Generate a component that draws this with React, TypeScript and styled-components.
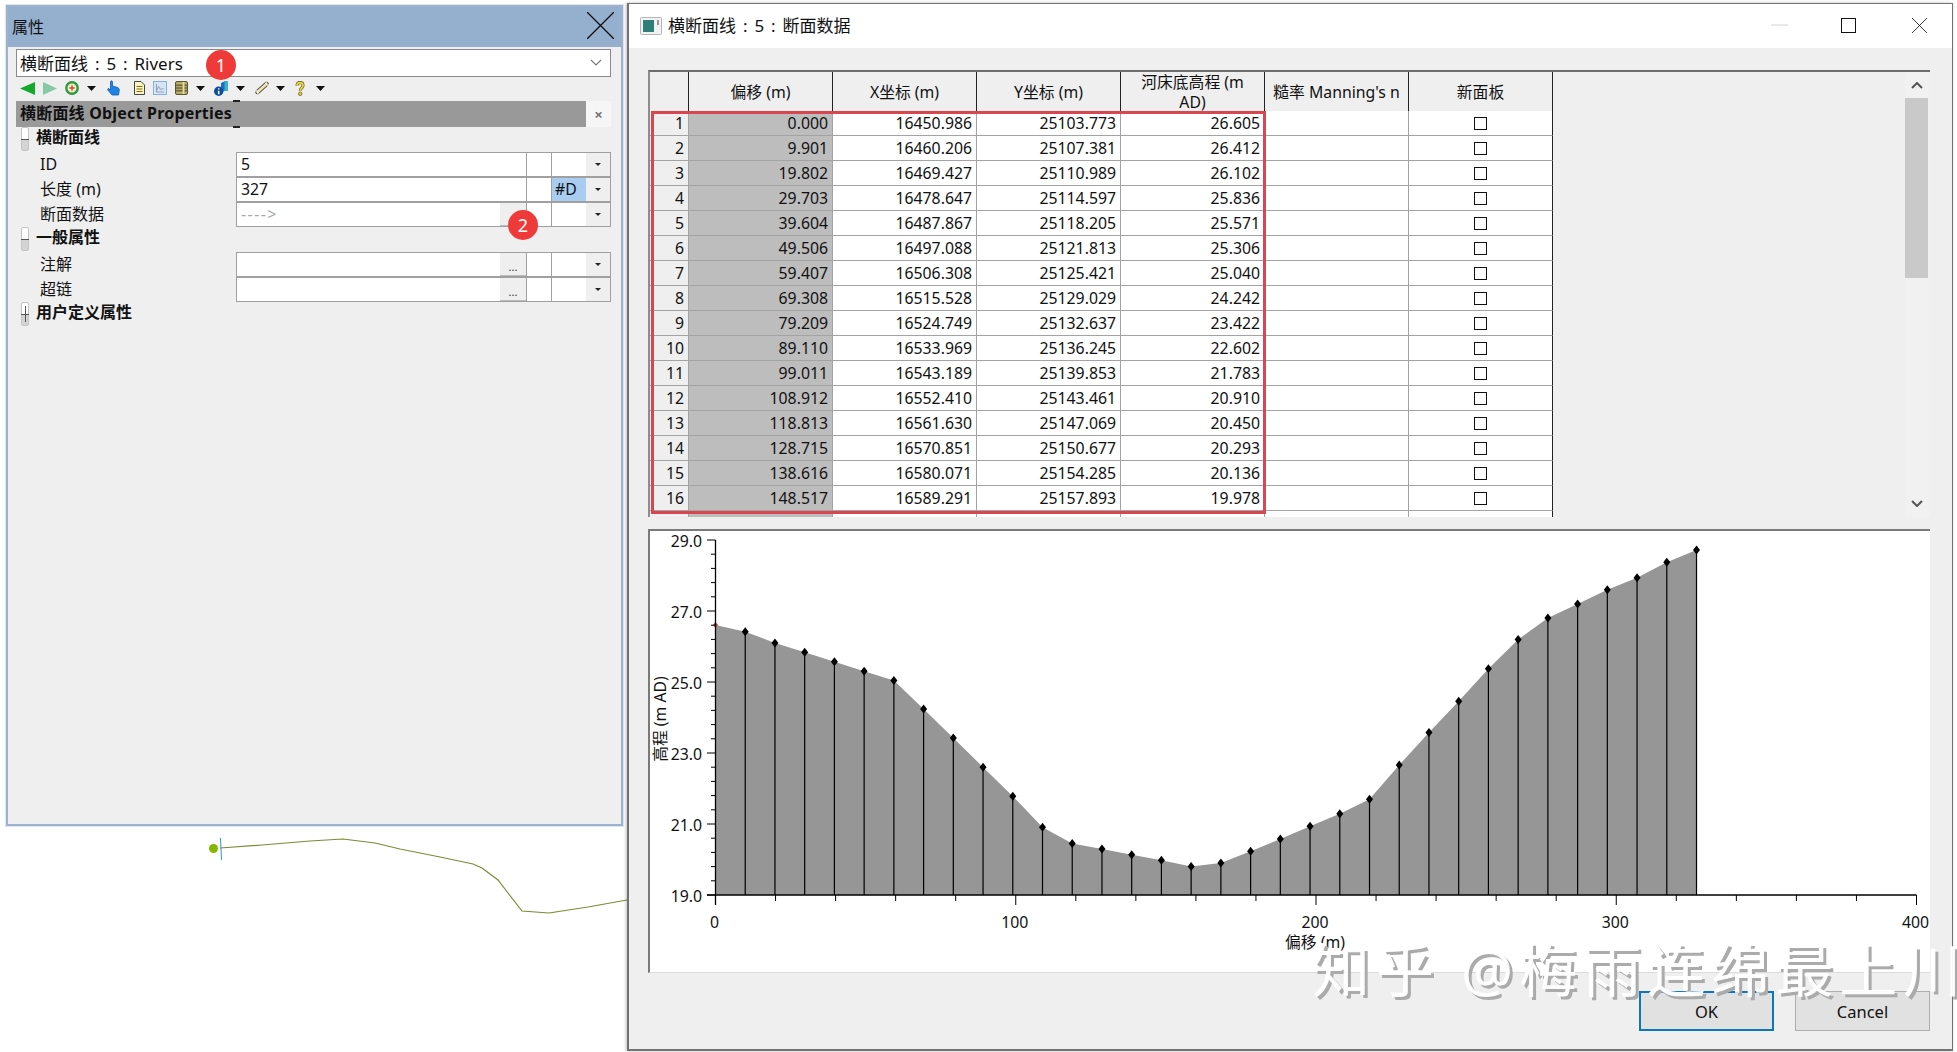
import React from 'react';
import styled, { createGlobalStyle } from 'styled-components';

const FONT = '"Noto Sans", "Noto Sans CJK SC", sans-serif';

const GlobalStyle = createGlobalStyle`
  html, body {
    margin: 0;
    padding: 0;
    background: #fff;
  }
  * {
    box-sizing: border-box;
  }
`;

const Desktop = styled.div`
  position: relative;
  width: 1957px;
  height: 1052px;
  overflow: hidden;
  background: #fff;
  font-family: ${FONT};
  color: #111;
`;

const RiverLine = styled.svg`
  position: absolute;
  left: 0;
  top: 0;
`;

/* ---------- properties window ---------- */

const PropsWindow = styled.section`
  position: absolute;
  left: 6px;
  top: 5px;
  width: 617px;
  height: 821px;
  background: #efefef;
  border: 2px solid #9db3cd;
  outline: 1px solid #dfe8f1;
  display: flex;
  flex-direction: column;
`;

const PropsTitleBar = styled.header`
  height: 40px;
  background: #95b0cf;
  display: flex;
  align-items: center;
  justify-content: space-between;
  padding: 0 7px 3px 4px;
  font-size: 16px;
`;

const PropsBody = styled.div`
  padding: 2px 10px 0 8px;
  display: flex;
  flex-direction: column;
`;

const ObjectSelect = styled.div`
  height: 28px;
  background: #fff;
  border: 1px solid #8a8a8a;
  display: flex;
  align-items: center;
  justify-content: space-between;
  padding: 0 8px 2px 3px;
  font-size: 17px;
  word-spacing: 2.5px;
`;

const Toolbar = styled.div`
  height: 24px;
  display: flex;
  align-items: center;
  padding: 0 0 2px 4px;
`;

const ToolIcon = styled.svg<{ $after: number }>`
  display: block;
  flex: none;
  margin-right: ${(p) => p.$after}px;
`;

const SectionHead = styled.div`
  height: 26px;
  display: flex;
  background: #efefef;
`;

const SectionTitle = styled.div`
  position: relative;
  flex: 1;
  background: #999;
  padding: 0 0 0 4px;
  font-size: 16px;
  font-weight: 700;
  letter-spacing: 0.2px;
  line-height: 24px;
  &::before,
  &::after {
    content: '';
    position: absolute;
    left: 217px;
    width: 7px;
    height: 2px;
    background: #222;
  }
  &::before {
    top: -1px;
  }
  &::after {
    bottom: -1px;
  }
`;

const SectionClose = styled.div`
  width: 25px;
  background: #f6f6f6;
  color: #777;
  font-size: 15px;
  font-weight: 700;
  text-align: center;
  line-height: 26px;
`;

const GroupRow = styled.div`
  height: 25px;
  display: flex;
  align-items: flex-start;
  gap: 7px;
  padding-left: 5px;
  font-size: 16px;
  font-weight: 700;
  line-height: 21px;
`;

const Toggle = styled.span<{ $closed?: boolean }>`
  position: relative;
  width: 8px;
  height: 24px;
  border: 1px solid #c4c4c4;
  border-radius: 2px;
  background: linear-gradient(#fff 50%, #d4d4d4 50%);
  &::before {
    content: '';
    position: absolute;
    left: -1px;
    right: -1px;
    top: 11px;
    height: 1px;
    background: #555;
  }
  &::after {
    content: '';
    display: ${(p) => (p.$closed ? 'block' : 'none')};
    position: absolute;
    left: 3px;
    top: 3px;
    bottom: 3px;
    width: 1px;
    background: #555;
  }
`;

const PropRow = styled.div`
  height: 25px;
  display: grid;
  grid-template-columns: 220px 290px 25px 35px 25px;
`;

const PropLabel = styled.div`
  padding-left: 24px;
  font-size: 16px;
  line-height: 24px;
`;

const PropValue = styled.div<{ $muted?: boolean }>`
  display: flex;
  justify-content: space-between;
  background: #fff;
  border: 1px solid #a0a0a0;
  border-width: 1px 0 1px 1px;
  padding-left: 4px;
  font-size: 15.8px;
  line-height: 23px;
  color: ${(p) => (p.$muted ? '#a8a8a8' : '#111')};
  letter-spacing: ${(p) => (p.$muted ? '1.5px' : '0')};
`;

const DotsButton = styled.span`
  width: 26px;
  height: 23px;
  overflow: hidden;
  background: #efefef;
  border-bottom: 1px solid #bbb;
  color: #333;
  font-size: 11px;
  line-height: 28px;
  letter-spacing: 0;
  text-align: center;
`;

const PropCell = styled.div<{ $selected?: boolean }>`
  background: ${(p) => (p.$selected ? '#a9cdf1' : '#fff')};
  border: 1px solid #a0a0a0;
  border-width: 1px 0 1px 1px;
  padding-left: 3px;
  font-size: 15.8px;
  line-height: 23px;
`;

const PropDrop = styled.div`
  position: relative;
  background: #efefef;
  border: 1px solid #a0a0a0;
  border-left: 0;
  &::after {
    content: '';
    position: absolute;
    left: 9px;
    top: 10px;
    border: 3px solid transparent;
    border-top: 3px solid #222;
  }
`;

const Badge = styled.span<{ $left: number; $top: number }>`
  position: absolute;
  left: ${(p) => p.$left}px;
  top: ${(p) => p.$top}px;
  width: 30px;
  height: 30px;
  border-radius: 50%;
  background: #ee3a38;
  color: #fff;
  font-size: 18px;
  line-height: 30px;
  text-align: center;
`;

/* ---------- section data dialog ---------- */

const DataDialog = styled.section`
  position: absolute;
  left: 627px;
  top: 3px;
  width: 1326px;
  height: 1048px;
  background: #efefef;
  border: 1px solid #727272;
  border-width: 1px 1px 2px 2px;
  box-shadow: -1px 0 3px rgba(0, 0, 0, 0.25);
  display: flex;
  flex-direction: column;
`;

const DialogTitleBar = styled.header`
  height: 44px;
  flex: none;
  background: #fff;
  display: flex;
  align-items: center;
  padding-left: 11px;
  font-size: 17px;
  word-spacing: 2.5px;
`;

const DialogTitle = styled.span`
  margin: 0 0 3px 6px;
  flex: 1;
`;

const WindowButton = styled.span<{ $w: number }>`
  width: ${(p) => p.$w}px;
  margin-bottom: 2px;
  display: flex;
  justify-content: center;
  align-items: center;
`;

const DialogBody = styled.div`
  flex: 1;
  padding: 22px 22px 0 19px;
  display: flex;
  flex-direction: column;
`;

const TableSection = styled.div`
  position: relative;
  flex: none;
  height: 447px;
  display: flex;
  overflow: hidden;
  border-top: 2px solid #6d6d6d;
  border-left: 2px solid #8d8d8d;
`;

const TableClip = styled.div`
  flex: 1;
  overflow: hidden;
`;

const GRID_COLUMNS = '39px repeat(6, 144px)';

const HeaderRow = styled.div`
  display: grid;
  grid-template-columns: ${GRID_COLUMNS};
  height: 39px;
  width: max-content;
`;

const HeaderCell = styled.div`
  display: flex;
  align-items: center;
  justify-content: center;
  text-align: center;
  padding: 0 1px 2px;
  background: #efefef;
  border-right: 1px solid #222;
  border-bottom: 1px solid #222;
  font-size: 15.8px;
  line-height: 20px;
  white-space: pre-line;
`;

const DataRow = styled.div`
  display: grid;
  grid-template-columns: ${GRID_COLUMNS};
  height: 25px;
  width: max-content;
`;

const Cell = styled.div<{ $tone?: 'head' | 'offset' }>`
  background: ${(p) => (p.$tone === 'head' ? '#efefef' : p.$tone === 'offset' ? '#bdbdbd' : '#fff')};
  border-right: 1px solid #a3a3a3;
  border-bottom: 1px solid #a3a3a3;
  padding-right: 4px;
  text-align: right;
  font-size: 15.8px;
  line-height: 24px;
`;

const CheckCell = styled.div`
  background: #fff;
  border-right: 1px solid #222;
  border-bottom: 1px solid #a3a3a3;
  display: flex;
  align-items: center;
  justify-content: center;
`;

const CheckBox = styled.span`
  width: 13px;
  height: 13px;
  border: 1px solid #111;
  background: #fff;
`;

const RedFrame = styled.div`
  position: absolute;
  left: 1px;
  top: 39px;
  width: 615px;
  height: 403px;
  border: 3px solid #d8474f;
  pointer-events: none;
`;

const ScrollBar = styled.div`
  position: relative;
  width: 25px;
  flex: none;
  background: #f1f1f1;
  display: flex;
  flex-direction: column;
  align-items: center;
  padding: 10px 2px 0 0;
`;

const ScrollThumb = styled.div`
  width: 23px;
  height: 180px;
  margin-top: 9px;
  background: #c9c9c9;
`;

const ScrollDown = styled.svg`
  margin-top: auto;
  margin-bottom: 10px;
`;

const ChartPanel = styled.div`
  flex: none;
  height: 444px;
  margin-top: 12px;
  background: #fff;
  border-top: 2px solid #7a7a7a;
  border-left: 2px solid #7a7a7a;
  border-bottom: 1px solid #dcdcdc;
`;

const ChartSvg = styled.svg`
  display: block;
`;

const AxisText = styled.text`
  font-family: ${FONT};
  font-size: 15.8px;
  fill: #111;
`;

const Footer = styled.footer`
  flex: 1;
  display: flex;
  justify-content: flex-end;
  gap: 21px;
  padding-top: 18px;
`;

const DialogButton = styled.button<{ $primary?: boolean }>`
  width: 135px;
  height: 40px;
  background: #e1e1e1;
  border: ${(p) => (p.$primary ? '2px solid #0f76bd' : '1px solid #adadad')};
  font-family: ${FONT};
  font-size: 16.5px;
  color: #111;
  padding: 0;
`;

const Watermark = styled.div`
  position: absolute;
  left: 1312px;
  top: 935px;
  font-family: ${FONT};
  font-size: 58px;
  line-height: 70px;
  letter-spacing: 6px;
  white-space: nowrap;
  color: rgba(255, 255, 255, 0.96);
  text-shadow: 3px 3px 0 #ababab;
  pointer-events: none;
`;

/* ---------- data ---------- */

const ROWS: [string, string, string, string][] = [
  ['0.000', '16450.986', '25103.773', '26.605'],
  ['9.901', '16460.206', '25107.381', '26.412'],
  ['19.802', '16469.427', '25110.989', '26.102'],
  ['29.703', '16478.647', '25114.597', '25.836'],
  ['39.604', '16487.867', '25118.205', '25.571'],
  ['49.506', '16497.088', '25121.813', '25.306'],
  ['59.407', '16506.308', '25125.421', '25.040'],
  ['69.308', '16515.528', '25129.029', '24.242'],
  ['79.209', '16524.749', '25132.637', '23.422'],
  ['89.110', '16533.969', '25136.245', '22.602'],
  ['99.011', '16543.189', '25139.853', '21.783'],
  ['108.912', '16552.410', '25143.461', '20.910'],
  ['118.813', '16561.630', '25147.069', '20.450'],
  ['128.715', '16570.851', '25150.677', '20.293'],
  ['138.616', '16580.071', '25154.285', '20.136'],
  ['148.517', '16589.291', '25157.893', '19.978'],
];

const MORE_LEVELS = [
  19.8, 19.9, 20.23, 20.58, 20.94, 21.29, 21.7, 22.66, 23.58, 24.46, 25.37, 26.2, 26.8, 27.2,
  27.6, 27.94, 28.37, 28.72,
];

const LEVELS = [...ROWS.map((r) => parseFloat(r[3])), ...MORE_LEVELS];

const px = (offset: number) => 715.5 + offset * 3.0025;
const py = (level: number) => 895 - (level - 19) * 35.5;

const POINTS = LEVELS.map((level, i) => ({ x: px(i * 9.901), y: py(level) }));

const AREA =
  `M${px(0)} 895 ` + POINTS.map((p) => `L${p.x} ${p.y}`).join(' ') + ` L${POINTS[POINTS.length - 1].x} 895 Z`;

/* ---------- small drawings ---------- */

const DropArrow = ({ after }: { after: number }) => (
  <ToolIcon $after={after} width="9" height="5" viewBox="0 0 9 5">
    <path d="M0 0h9L4.500 5z" fill="#111" />
  </ToolIcon>
);

const ToolbarIcons = () => (
  <Toolbar>
    <ToolIcon $after={8} width="15" height="13" viewBox="0 0 15 13">
      <path d="M15 0v13L0 6.500z" fill="#14a82c" />
    </ToolIcon>
    <ToolIcon $after={8} width="14" height="13" viewBox="0 0 14 13">
      <path d="M0 0v13l14-6.500z" fill="#86c9a6" />
    </ToolIcon>
    <ToolIcon $after={8} width="14" height="14" viewBox="0 0 14 14">
      <circle cx="7" cy="7" r="5.700" fill="#f4f1cf" stroke="#2f9a3a" strokeWidth="2.400" />
      <path d="M7 3.200l1 2.800 2.800 1-2.800 1-1 2.800-1-2.800-2.800-1 2.800-1z" fill="#e2503a" />
    </ToolIcon>
    <DropArrow after={11} />
    <ToolIcon $after={14} width="13" height="16" viewBox="0 0 13 16">
      <path
        d="M3.500 1.500c.8-1.200 2-.7 2 .6V6l4.500 1.300c1.500.5 2.500 1.500 2.300 3L11.500 15H5L.8 10c-.6-1 .6-2 1.500-1.200L3.500 10z"
        fill="#1f84e6"
        stroke="#0c4fa8"
        strokeWidth=".7"
      />
    </ToolIcon>
    <ToolIcon $after={8} width="11" height="14" viewBox="0 0 11 14">
      <path d="M.5.500h6.500l3.500 3.500v9.500H.5z" fill="#fdf6bf" stroke="#444" />
      <path d="M2.500 5.500h6M2.500 8h6M2.500 10.500h6" stroke="#8a6a1d" />
    </ToolIcon>
    <ToolIcon $after={8} width="14" height="14" viewBox="0 0 14 14">
      <rect x=".5" y=".5" width="13" height="13" fill="#d5e4f7" stroke="#86aee0" />
      <path d="M3.500 10l2-4.500 2 3 3-1M3.500 3v8h7.500" fill="none" stroke="#8f9fb5" />
    </ToolIcon>
    <ToolIcon $after={8} width="13" height="14" viewBox="0 0 13 14">
      <rect x=".5" y=".5" width="12" height="13" rx="1.500" fill="#b8a969" stroke="#5a5536" />
      <path d="M1 4.200h11M1 7h11M1 9.800h11" stroke="#4d4826" />
      <path d="M8.500 1v12" stroke="#e8dda8" strokeWidth="1.800" />
    </ToolIcon>
    <DropArrow after={9} />
    <ToolIcon $after={8} width="14" height="15" viewBox="0 0 14 15">
      <path d="M7 2l4-2v10H7z" fill="#1d6fc4" />
      <path d="M10.500 0H14v10h-3.500z" fill="#3ab2cc" />
      <circle cx="4.700" cy="10.300" r="4.700" fill="#0d4d9c" />
      <path d="M4.700 7.300v1.200M4.700 9.700v3.500" stroke="#fff" strokeWidth="1.500" />
    </ToolIcon>
    <DropArrow after={9} />
    <ToolIcon $after={6} width="16" height="14" viewBox="0 0 16 14">
      <path d="M3.500 11L12.500 3" stroke="#5f5537" strokeWidth="4.500" strokeLinecap="round" />
      <path d="M3.500 11L12.500 3" stroke="#efe5c3" strokeWidth="2.500" strokeLinecap="round" />
      <path d="M13 .5l-1.500 2L14 4.500l1.500-1.500M3 13.500l1.500-2L2 9.500.5 11" fill="none" stroke="#fff" />
    </ToolIcon>
    <DropArrow after={10} />
    <ToolIcon $after={11} width="10" height="15" viewBox="0 0 10 15">
      <path
        d="M2 4.800C2 2.800 3.300 1.600 5 1.600S8 2.800 8 4.500C8 6.700 5.200 7 5.200 9.700"
        fill="none"
        stroke="#5e5320"
        strokeWidth="3"
      />
      <path
        d="M2 4.800C2 2.800 3.300 1.600 5 1.600S8 2.800 8 4.500C8 6.700 5.200 7 5.200 9.700"
        fill="none"
        stroke="#f5d83c"
        strokeWidth="1.700"
      />
      <circle cx="5.200" cy="12.800" r="1.700" fill="#f5d83c" stroke="#5e5320" strokeWidth=".8" />
    </ToolIcon>
    <DropArrow after={0} />
  </Toolbar>
);

const CloseCross = ({ size, width }: { size: number; width: number }) => (
  <svg width={size} height={size} viewBox="0 0 20 20" style={{ display: 'block' }}>
    <path d="M0 0l20 20M20 0L0 20" stroke="#111" strokeWidth={width} fill="none" />
  </svg>
);

const Chart = () => {
  const minorY: number[] = [];
  for (let v = 19; v <= 29.01; v += 0.4) minorY.push(v);
  const minorX: number[] = [];
  for (let v = 0; v <= 400; v += 20) minorX.push(v);
  return (
    <ChartSvg width="1279" height="441" viewBox="650 531 1279 441">
      <path d={AREA} fill="#969696" />
      {POINTS.slice(1).map((p, i) => (
        <line key={i} x1={p.x} y1={p.y} x2={p.x} y2="895" stroke="#000" strokeWidth="1.200" />
      ))}
      {POINTS.slice(1).map((p, i) => (
        <path key={i} d={`M${p.x} ${p.y - 4.500}l3.500 4.500l-3.500 4.500l-3.500-4.500z`} fill="#000" />
      ))}
      <path d={`M${POINTS[0].x} ${POINTS[0].y - 3}l2.500 3l-2.500 3l-2.500-3z`} fill="#d0343c" />
      <line x1="715.500" y1="540" x2="715.500" y2="905" stroke="#000" strokeWidth="1.300" />
      <line x1="707" y1="895" x2="1916.500" y2="895" stroke="#000" strokeWidth="1.300" />
      {minorY.map((v, i) => (
        <line
          key={v}
          x1={i % 5 === 0 ? 707 : 711}
          x2="715.500"
          y1={py(v)}
          y2={py(v)}
          stroke="#000"
          strokeWidth="1"
        />
      ))}
      {minorX.map((v, i) => (
        <line
          key={v}
          x1={px(v)}
          x2={px(v)}
          y1="895"
          y2={i % 5 === 0 ? 905 : 901}
          stroke="#000"
          strokeWidth="1"
        />
      ))}
      {['29.0', '27.0', '25.0', '23.0', '21.0', '19.0'].map((t) => (
        <AxisText key={t} x="702" y={py(parseFloat(t)) + 7} textAnchor="end">
          {t}
        </AxisText>
      ))}
      {[0, 100, 200, 300, 400].map((v) => (
        <AxisText key={v} x={px(v) - 1} y="928" textAnchor="middle">
          {v}
        </AxisText>
      ))}
      <AxisText x="1315" y="948" textAnchor="middle">
        偏移 (m)
      </AxisText>
      <AxisText x="666" y="719" textAnchor="middle" transform="rotate(-90 666 719)">
        高程 (m AD)
      </AxisText>
    </ChartSvg>
  );
};

export default function App() {
  return (
    <Desktop>
      <GlobalStyle />

      <RiverLine width="1957" height="1052" viewBox="0 0 1957 1052">
        <path
          d="M220 848L262 845L310 841L343 839L375 843L400 849L440 857L473 864L482 868L498 880L508 893L522 911L549 913L588 907L627 900"
          fill="none"
          stroke="#7c8a35"
          strokeWidth="1.200"
        />
        <line x1="220.500" y1="838" x2="221.500" y2="860" stroke="#2b9cc4" strokeWidth="1" />
        <circle cx="213.500" cy="848.500" r="4.500" fill="#84b800" />
      </RiverLine>

      <PropsWindow>
        <PropsTitleBar>
          <span>属性</span>
          <CloseCross size={27} width={1} />
        </PropsTitleBar>
        <PropsBody>
          <ObjectSelect>
            <span>横断面线 : 5 : Rivers</span>
            <svg width="12" height="7" viewBox="0 0 12 7">
              <path d="M1 1l5 5 5-5" fill="none" stroke="#777" strokeWidth="1.100" />
            </svg>
          </ObjectSelect>
          <ToolbarIcons />
          <SectionHead>
            <SectionTitle>横断面线 Object Properties</SectionTitle>
            <SectionClose>×</SectionClose>
          </SectionHead>

          <GroupRow>
            <Toggle />
            横断面线
          </GroupRow>
          <PropRow>
            <PropLabel>ID</PropLabel>
            <PropValue>5</PropValue>
            <PropCell />
            <PropCell />
            <PropDrop />
          </PropRow>
          <PropRow>
            <PropLabel>长度 (m)</PropLabel>
            <PropValue>327</PropValue>
            <PropCell />
            <PropCell $selected>#D</PropCell>
            <PropDrop />
          </PropRow>
          <PropRow>
            <PropLabel>断面数据</PropLabel>
            <PropValue $muted>
              ----&gt;
              <DotsButton />
            </PropValue>
            <PropCell />
            <PropCell />
            <PropDrop />
          </PropRow>

          <GroupRow>
            <Toggle />
            一般属性
          </GroupRow>
          <PropRow>
            <PropLabel>注解</PropLabel>
            <PropValue>
              <span />
              <DotsButton>...</DotsButton>
            </PropValue>
            <PropCell />
            <PropCell />
            <PropDrop />
          </PropRow>
          <PropRow>
            <PropLabel>超链</PropLabel>
            <PropValue>
              <span />
              <DotsButton>...</DotsButton>
            </PropValue>
            <PropCell />
            <PropCell />
            <PropDrop />
          </PropRow>

          <GroupRow>
            <Toggle $closed />
            用户定义属性
          </GroupRow>
        </PropsBody>
        <Badge $left={198} $top={43}>
          1
        </Badge>
        <Badge $left={500} $top={203}>
          2
        </Badge>
      </PropsWindow>

      <DataDialog>
        <DialogTitleBar>
          <svg width="22" height="18" viewBox="0 0 22 18">
            <rect x=".5" y=".5" width="21" height="17" rx="1" fill="#f2f2f2" stroke="#b5b5b5" />
            <rect x="3" y="3" width="11" height="12" fill="#2f7f78" />
            <rect x="17" y="3" width="2" height="5" fill="#9a9a9a" />
          </svg>
          <DialogTitle>横断面线 : 5 : 断面数据</DialogTitle>
          <WindowButton $w={61}>
            <svg width="17" height="2" viewBox="0 0 17 2">
              <path d="M0 1h17" stroke="#d2d2d2" strokeWidth="1" />
            </svg>
          </WindowButton>
          <WindowButton $w={77}>
            <svg width="15" height="15" viewBox="0 0 15 15">
              <rect x=".5" y=".5" width="14" height="14" fill="none" stroke="#111" />
            </svg>
          </WindowButton>
          <WindowButton $w={65}>
            <CloseCross size={15} width={1.100} />
          </WindowButton>
        </DialogTitleBar>

        <DialogBody>
          <TableSection>
            <TableClip>
              <HeaderRow>
                <HeaderCell />
                <HeaderCell>偏移 (m)</HeaderCell>
                <HeaderCell>X坐标 (m)</HeaderCell>
                <HeaderCell>Y坐标 (m)</HeaderCell>
                <HeaderCell>{'河床底高程 (m\nAD)'}</HeaderCell>
                <HeaderCell>糙率 Manning's n</HeaderCell>
                <HeaderCell>新面板</HeaderCell>
              </HeaderRow>
              {ROWS.map((row, i) => (
                <DataRow key={row[0]}>
                  <Cell $tone="head">{i + 1}</Cell>
                  <Cell $tone="offset">{row[0]}</Cell>
                  <Cell>{row[1]}</Cell>
                  <Cell>{row[2]}</Cell>
                  <Cell>{row[3]}</Cell>
                  <Cell />
                  <CheckCell>
                    <CheckBox />
                  </CheckCell>
                </DataRow>
              ))}
              <DataRow>
                <Cell $tone="head" />
                <Cell $tone="offset" />
                <Cell />
                <Cell />
                <Cell />
                <Cell />
                <CheckCell />
              </DataRow>
            </TableClip>
            <RedFrame />
            <ScrollBar>
              <svg width="12" height="7" viewBox="0 0 12 7">
                <path d="M1 6l5-5 5 5" fill="none" stroke="#555" strokeWidth="2" />
              </svg>
              <ScrollThumb />
              <ScrollDown width="12" height="7" viewBox="0 0 12 7">
                <path d="M1 1l5 5 5-5" fill="none" stroke="#555" strokeWidth="2" />
              </ScrollDown>
            </ScrollBar>
          </TableSection>

          <ChartPanel>
            <Chart />
          </ChartPanel>

          <Footer>
            <DialogButton $primary>OK</DialogButton>
            <DialogButton>Cancel</DialogButton>
          </Footer>
        </DialogBody>
      </DataDialog>

      <Watermark>知乎 @梅雨连绵最上川</Watermark>
    </Desktop>
  );
}
